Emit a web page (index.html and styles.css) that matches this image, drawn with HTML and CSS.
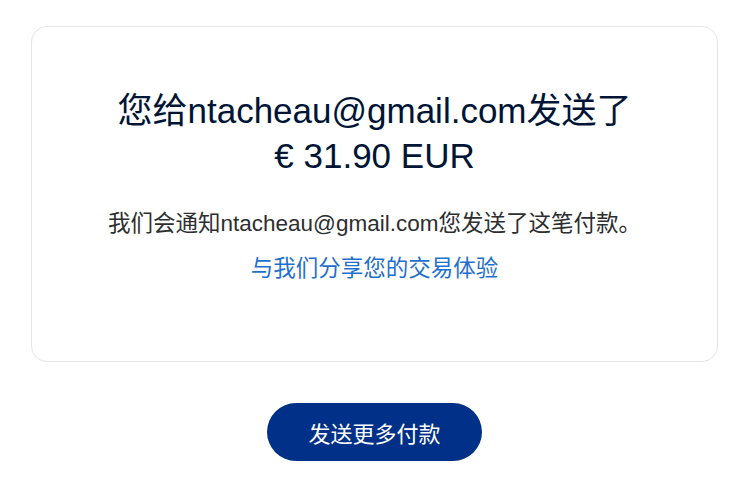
FILE: index.html
```html
<!DOCTYPE html>
<html lang="zh-CN">
<head>
    <meta charset="UTF-8">
    <meta name="viewport" content="width=device-width, initial-scale=1.0">
    <title>付款已发送</title>
    <link rel="stylesheet" href="styles.css">
</head>
<body>
    <div class="page">
        <div class="card">
            <h1 class="title">您给ntacheau@gmail.com发送了<br>€ 31.90 EUR</h1>
            <p class="notice">我们会通知ntacheau@gmail.com您发送了这笔付款。</p>
            <a class="feedback" href="#">与我们分享您的交易体验</a>
        </div>
        <div class="actions">
            <button class="send-more">发送更多付款</button>
        </div>
    </div>
</body>
</html>
```

FILE: styles.css
```css
body {
    margin: 0;
    padding: 0;
    background-color: #fff;
    font-family: "Liberation Sans", "Noto Sans CJK SC", sans-serif;
}
.page {
    margin: 26px 23px 0 31px;
}
.card {
    border: 1px solid #e6e6e6;
    border-radius: 16px;
    height: 336px;
    box-sizing: border-box;
    padding-top: 61px;
    text-align: center;
}
.title {
    margin: 0;
    font-size: 35px;
    line-height: 45px;
    font-weight: normal;
    color: #001435;
}
.notice {
    margin: 31px 0 0;
    font-size: 22.5px;
    line-height: 30px;
    color: #2c2e2f;
}
.feedback {
    display: inline-block;
    margin-top: 15px;
    font-size: 22.5px;
    line-height: 30px;
    color: #1f6fcf;
    text-decoration: none;
}
.actions {
    display: flex;
    justify-content: center;
    margin-top: 41px;
}
.send-more {
    height: 58px;
    padding: 0 41px;
    border: none;
    border-radius: 29px;
    background-color: #003087;
    color: #fff;
    font-family: "Liberation Sans", "Noto Sans CJK SC", sans-serif;
    font-size: 22px;
    cursor: pointer;
}
```
